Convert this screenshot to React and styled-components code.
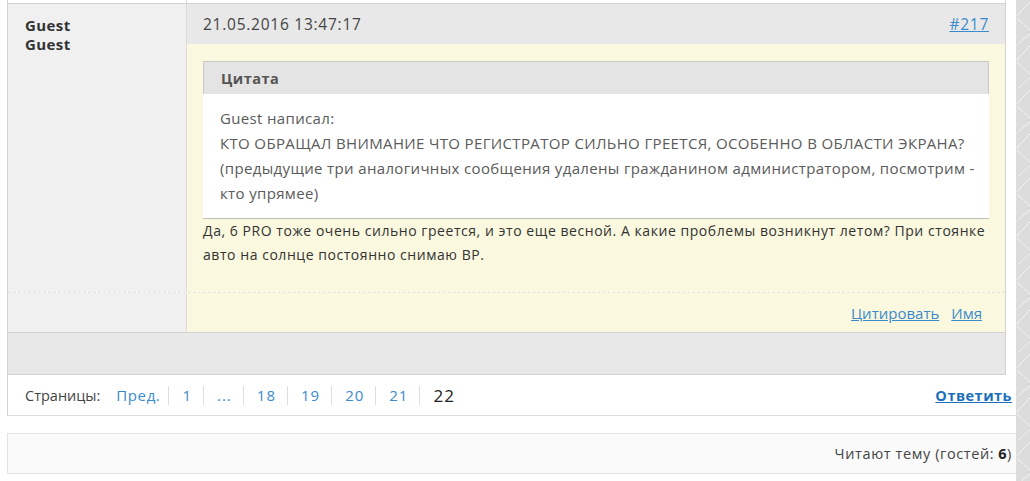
import React from "react";
import styled, { createGlobalStyle } from "styled-components";

const GlobalStyle = createGlobalStyle`
  body {
    margin: 0;
    background: #fff;
    font-family: "Open Sans", "Noto Sans", sans-serif;
    color: #333;
  }
`;

const Page = styled.div`
  display: flex;
  width: 1030px;
  height: 481px;
  overflow: hidden;
`;

const Main = styled.div`
  width: 1016px;
  padding-left: 7px;
  box-sizing: border-box;
`;

const Side = styled.div`
  flex: 1;
  background-color: #dcdcdc;
  background-image: url("data:image/svg+xml,%3Csvg xmlns='http://www.w3.org/2000/svg' width='14' height='44'%3E%3Cpath d='M14 2 C8 8 4 12 1 16 M1 18 C5 22 9 26 14 30 M14 34 C10 37 6 40 3 44' stroke='%23f2f2f2' stroke-width='1' fill='none'/%3E%3C/svg%3E");
  background-repeat: repeat-y;
`;

const Table = styled.div`
  margin-right: 10px;
  border-left: 1px solid #d2d2d2;
  border-right: 1px solid #d2d2d2;
`;

const Row = styled.div`
  display: grid;
  grid-template-columns: 179px 1fr;
  height: ${(p) => (p.$h ? `${p.$h}px` : "auto")};
  border-top: ${(p) => (p.$dashed ? "1px dashed #e2e2d6" : p.$top ? "1px solid #d2d2d2" : "none")};
`;

const AuthorCell = styled.div`
  background: ${(p) => (p.$white ? "#fff" : "#f0f0f0")};
  border-right: 1px solid #dcdcdc;
  padding: ${(p) => (p.$white ? "0" : "12px 17px")};
  font-size: 15px;
  font-weight: 700;
  letter-spacing: 0.4px;
  line-height: 19px;
  color: #333;
`;

const ContentCell = styled.div`
  background: ${(p) => (p.$white ? "#fff" : "#faf8df")};
  display: flex;
  flex-direction: column;
`;

const PostHeader = styled.div`
  height: 40px;
  background: #e8e8e8;
  display: flex;
  align-items: center;
  justify-content: space-between;
  padding: 0 16px;
  font-size: 15.5px;
  letter-spacing: 0.75px;
  color: #444;
`;

const Link = styled.a`
  color: ${(p) => (p.$strong ? "#1a6fbd" : "#3a8bcc")};
  font-weight: ${(p) => (p.$strong ? 700 : 400)};
  letter-spacing: ${(p) => (p.$strong ? "0.5px" : "inherit")};
  text-decoration: underline;
  cursor: pointer;
`;

const PostBody = styled.div`
  padding: 17px 16px 25px;
`;

const Quote = styled.div`
  background: #fff;
  border-bottom: 1px solid #bdbdbd;
`;

const QuoteTitle = styled.div`
  height: 32px;
  background: #e4e4e4;
  border: 1px solid #c8c8c8;
  border-bottom: none;
  display: flex;
  align-items: center;
  padding-left: 17px;
  font-size: 14.5px;
  font-weight: 700;
  letter-spacing: 0.5px;
  color: #555;
`;

const QuoteText = styled.div`
  padding: 12px 6px 12px 17px;
  font-size: 15px;
  letter-spacing: 0.35px;
  line-height: 25px;
  color: #5a5a5a;
`;

const Message = styled.div`
  font-size: 14px;
  letter-spacing: 0.55px;
  line-height: 24px;
  color: #333;
`;

const Actions = styled.div`
  height: 100%;
  display: flex;
  justify-content: flex-end;
  align-items: center;
  gap: 12px;
  padding-right: 23px;
  font-size: 15px;
`;

const Bar = styled.div`
  height: 41px;
  background: #e8e8e8;
  border-top: 1px solid #d2d2d2;
  border-bottom: 1px solid #d2d2d2;
`;

const Pager = styled.div`
  height: 40px;
  border-left: 1px solid #d2d2d2;
  border-bottom: 1px solid #dedede;
  display: flex;
  align-items: center;
  justify-content: space-between;
  padding: 0 4px 0 17px;
  font-size: 14.5px;
`;

const Pages = styled.div`
  display: flex;
  align-items: center;
`;

const Label = styled.span`
  color: #444;
  margin-right: 16px;
`;

const PageItem = styled.span`
  line-height: 19px;
  border-left: ${(p) => (p.$first ? "none" : "1px solid #dedede")};
  padding: ${(p) => (p.$first ? "0 8px 0 0" : "0 11px 0 13px")};
  color: ${(p) => (p.$current ? "#222" : "#3a8bcc")};
  font-size: ${(p) => (p.$current ? "17px" : "15px")};
  letter-spacing: ${(p) => (p.$first ? "0.6px" : "1px")};
`;

const Readers = styled.div`
  margin-top: 17px;
  height: 39px;
  background: #fafafa;
  border: 1px solid #e2e2e2;
  border-right: none;
  display: flex;
  align-items: center;
  justify-content: flex-end;
  padding-right: 4px;
  font-size: 14.5px;
  letter-spacing: 0.6px;
  color: #444;

  b {
    color: #222;
    margin-left: 4px;
  }
`;

const pages = ["Пред.", "1", "...", "18", "19", "20", "21"];

export default function App() {
  return (
    <>
      <GlobalStyle />
      <Page>
        <Main>
          <Table>
            <Row $h={3}>
              <AuthorCell $white />
              <ContentCell $white />
            </Row>
            <Row $top>
              <AuthorCell>
                Guest
                <br />
                Guest
              </AuthorCell>
              <ContentCell>
                <PostHeader>
                  <span>21.05.2016 13:47:17</span>
                  <Link>#217</Link>
                </PostHeader>
                <PostBody>
                  <Quote>
                    <QuoteTitle>Цитата</QuoteTitle>
                    <QuoteText>
                      Guest написал:
                      <br />
                      КТО ОБРАЩАЛ ВНИМАНИЕ ЧТО РЕГИСТРАТОР СИЛЬНО ГРЕЕТСЯ, ОСОБЕННО В ОБЛАСТИ ЭКРАНА?
                      <br />
                      (предыдущие три аналогичных сообщения удалены гражданином администратором, посмотрим -
                      кто упрямее)
                    </QuoteText>
                  </Quote>
                  <Message>
                    Да, 6 PRO тоже очень сильно греется, и это еще весной. А какие проблемы возникнут летом? При
                    стоянке авто на солнце постоянно снимаю ВР.
                  </Message>
                </PostBody>
              </ContentCell>
            </Row>
            <Row $dashed $h={39}>
              <AuthorCell />
              <ContentCell>
                <Actions>
                  <Link>Цитировать</Link>
                  <Link>Имя</Link>
                </Actions>
              </ContentCell>
            </Row>
            <Bar />
          </Table>
          <Pager>
            <Pages>
              <Label>Страницы:</Label>
              {pages.map((p, i) => (
                <PageItem key={p} $first={i === 0}>
                  {p}
                </PageItem>
              ))}
              <PageItem $current>22</PageItem>
            </Pages>
            <Link $strong>Ответить</Link>
          </Pager>
          <Readers>
            Читают тему (гостей:<b>6</b>)
          </Readers>
        </Main>
        <Side />
      </Page>
    </>
  );
}
